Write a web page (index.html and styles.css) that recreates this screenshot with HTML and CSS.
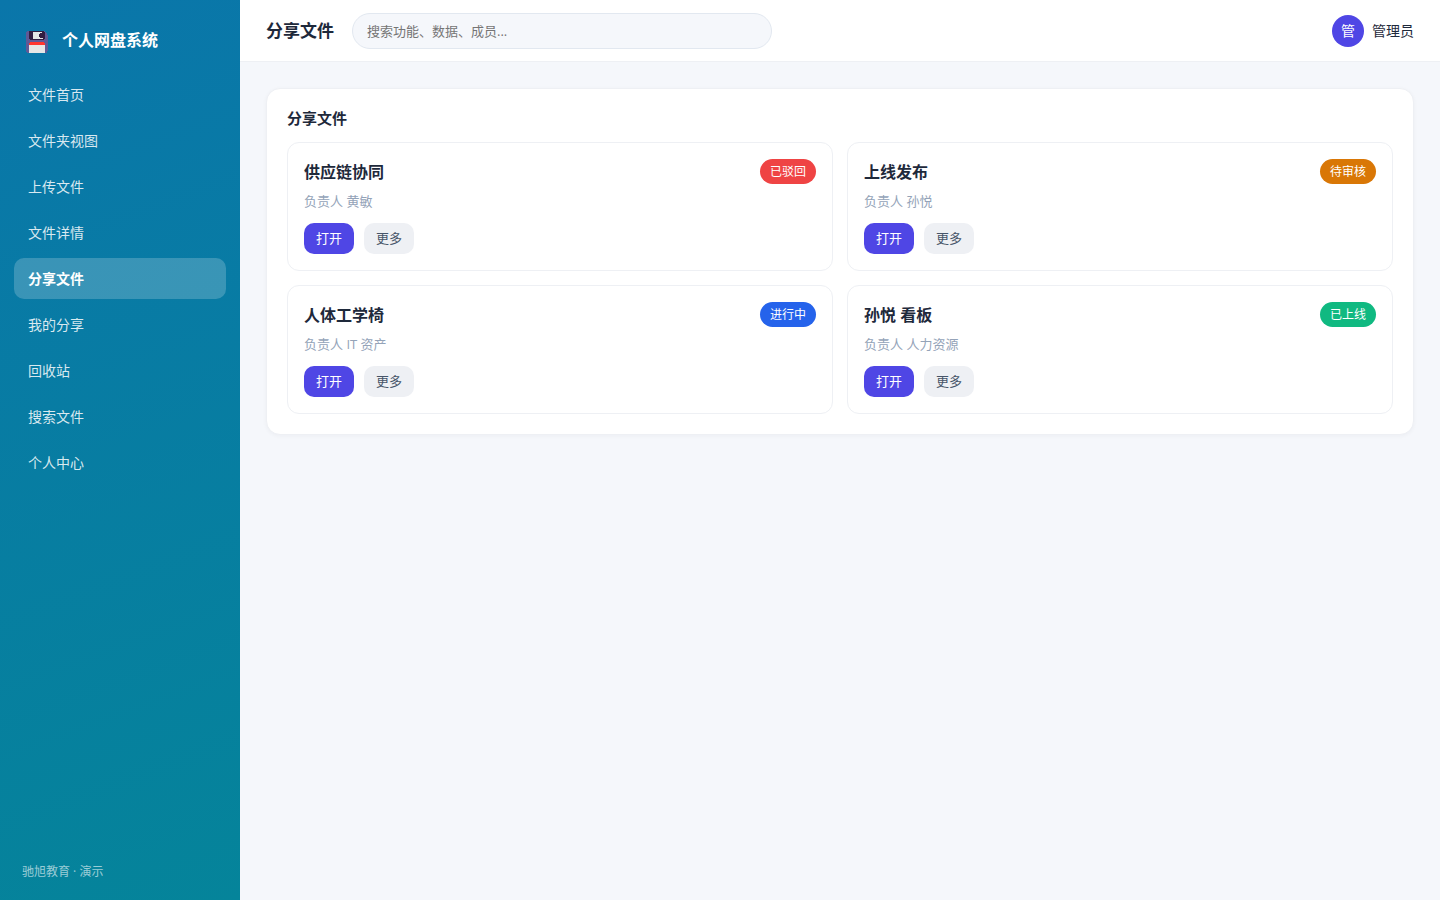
FILE: index.html
```html
<!DOCTYPE html>
<html lang="zh-CN">
<head>
<meta charset="utf-8">
<title>分享文件 - 个人网盘系统</title>
<link rel="stylesheet" href="styles.css">
</head>
<body>
<div class="app">
  <aside class="sidebar">
    <div class="brand">
      <svg class="brand-icon" viewBox="0 0 22 22" aria-hidden="true" shape-rendering="crispEdges">
        <path fill="#5f5a96" d="M1 0H19V1H20V2H21V4H22V20H21V22H1V21H0V1H1Z"/>
        <path fill="#321e42" d="M3 0H18V1H19V8H18V9H4V8H3Z"/>
        <path fill="#e6e6e6" d="M7 1H16V2H14V3H13V6H14V7H17V8H7Z"/>
        <path fill="#ff352f" d="M4 11H18V12H19V14H3V12H4Z"/>
        <path fill="#e6e6e6" d="M3 14H19V22H3Z"/>
      </svg>
      <span class="brand-name">个人网盘系统</span>
    </div>
    <nav class="nav">
      <a class="nav-item" href="#">文件首页</a>
      <a class="nav-item" href="#">文件夹视图</a>
      <a class="nav-item" href="#">上传文件</a>
      <a class="nav-item" href="#">文件详情</a>
      <a class="nav-item active" href="#" aria-current="page">分享文件</a>
      <a class="nav-item" href="#">我的分享</a>
      <a class="nav-item" href="#">回收站</a>
      <a class="nav-item" href="#">搜索文件</a>
      <a class="nav-item" href="#">个人中心</a>
    </nav>
    <div class="sidebar-foot">驰旭教育 · 演示</div>
  </aside>
  <div class="main">
    <header class="topbar">
      <h1 class="page-title">分享文件</h1>
      <input class="search" type="search" aria-label="搜索" placeholder="搜索功能、数据、成员...">
      <div class="user"><span class="avatar">管</span><span>管理员</span></div>
    </header>
    <main class="content">
      <section class="panel">
        <h2 class="panel-title">分享文件</h2>
        <div class="cards">
          <article class="card">
            <div class="card-head"><h3 class="card-title">供应链协同</h3><span class="badge red">已驳回</span></div>
            <p class="owner">负责人 黄敏</p>
            <div class="actions"><button class="btn primary" type="button">打开</button><button class="btn" type="button">更多</button></div>
          </article>
          <article class="card">
            <div class="card-head"><h3 class="card-title">上线发布</h3><span class="badge amber">待审核</span></div>
            <p class="owner">负责人 孙悦</p>
            <div class="actions"><button class="btn primary" type="button">打开</button><button class="btn" type="button">更多</button></div>
          </article>
          <article class="card">
            <div class="card-head"><h3 class="card-title">人体工学椅</h3><span class="badge blue">进行中</span></div>
            <p class="owner">负责人 IT 资产</p>
            <div class="actions"><button class="btn primary" type="button">打开</button><button class="btn" type="button">更多</button></div>
          </article>
          <article class="card">
            <div class="card-head"><h3 class="card-title">孙悦 看板</h3><span class="badge green">已上线</span></div>
            <p class="owner">负责人 人力资源</p>
            <div class="actions"><button class="btn primary" type="button">打开</button><button class="btn" type="button">更多</button></div>
          </article>
        </div>
      </section>
    </main>
  </div>
</div>
</body>
</html>
```
FILE: styles.css
```css
* { box-sizing: border-box; }
body {
  margin: 0;
  background: #f5f7fb;
  color: #1e293b;
  font: 14px/21px "Open Sans", "Noto Sans CJK SC", sans-serif;
}
h1, h2, h3, p { margin: 0; }
button, input { font-family: inherit; }

.app { display: flex; min-height: 100vh; }

.sidebar {
  display: flex;
  flex-direction: column;
  flex: 0 0 240px;
  padding: 22px 14px 18px;
  background: linear-gradient(160deg, #0a76aa, #05849a);
  color: #fff;
}
.brand {
  display: flex;
  align-items: center;
  gap: 14px;
  height: 40px;
  margin-bottom: 12px;
  padding: 0 12px;
  font-size: 16px;
  font-weight: 700;
}
.brand-icon { width: 22px; height: 22px; }
.brand-name { padding-bottom: 4px; }
.nav { display: flex; flex-direction: column; gap: 5px; }
.nav-item {
  padding: 10px 14px;
  border-radius: 10px;
  color: rgba(255, 255, 255, 0.85);
  text-decoration: none;
}
.nav-item.active {
  background: rgba(255, 255, 255, 0.2);
  color: #fff;
  font-weight: 700;
}
.sidebar-foot {
  margin-top: auto;
  padding: 0 8px;
  font-size: 12px;
  line-height: 20px;
  color: rgba(255, 255, 255, 0.6);
}

.main { flex: 1; min-width: 0; }
.topbar {
  display: flex;
  align-items: center;
  gap: 18px;
  height: 62px;
  padding: 0 26px;
  background: #fff;
  border-bottom: 1px solid #eef0f4;
}
.page-title { font-size: 17px; line-height: 24px; }
.search {
  flex: 0 1 420px;
  min-width: 0;
  height: 36px;
  padding: 0 14px;
  border: 1px solid #e2e8f0;
  border-radius: 18px;
  background: #f5f7fb;
  font-size: 13px;
  outline: none;
  appearance: none;
}
.user { display: flex; align-items: center; gap: 8px; margin-left: auto; }
.avatar {
  width: 32px;
  height: 32px;
  border-radius: 50%;
  background: #4f46e5;
  color: #fff;
  line-height: 32px;
  text-align: center;
}

.content { padding: 26px; }
.panel {
  padding: 20px;
  border: 1px solid #eef0f4;
  border-radius: 14px;
  background: #fff;
  box-shadow: 0 1px 4px rgba(15, 23, 42, 0.04);
}
.panel-title { margin-bottom: 14px; font-size: 15px; line-height: 19px; }
.cards { display: grid; grid-template-columns: 1fr 1fr; gap: 14px; }
.card {
  padding: 16px;
  border: 1px solid #eef0f4;
  border-radius: 12px;
  background: #fff;
}
.card-head { display: flex; justify-content: space-between; align-items: center; }
.card-title { font-size: 16px; line-height: 24px; }
.badge {
  padding: 0 10px;
  border-radius: 13px;
  color: #fff;
  font-size: 12px;
  line-height: 25px;
}
.red { background: #ef4444; }
.amber { background: #d97706; }
.blue { background: #2563eb; }
.green { background: #10b981; }
.owner { margin: 7px 0 11px; color: #94a3b8; font-size: 13px; line-height: 21px; }
.actions { display: flex; gap: 10px; }
.btn {
  padding: 0 12px;
  border: 0;
  border-radius: 10px;
  background: #eef0f4;
  color: #475569;
  font-size: 13px;
  line-height: 31px;
}
.btn.primary { background: #4f46e5; color: #fff; }
```
